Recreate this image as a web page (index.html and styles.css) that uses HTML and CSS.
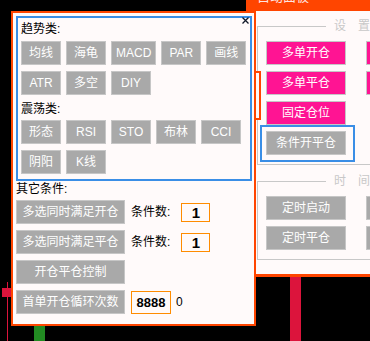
FILE: index.html
```html
<!DOCTYPE html>
<html lang="zh-CN">
<head>
	<meta charset="UTF-8">
	<title>自动面板</title>
	<link rel="stylesheet" href="styles.css">
</head>
<body>
	<!-- 背景K线 -->
	<div class="candle wick-a"></div>
	<div class="candle body-a"></div>
	<div class="candle body-b"></div>
	<div class="candle body-c"></div>

	<!-- 后面的自动面板 -->
	<div class="panel">
		<div class="panel-title"><span>自动面板</span></div>
		<div class="panel-body">
			<fieldset class="group">
				<legend>设置</legend>
				<div class="group-grid">
					<div class="btn pink">多单开仓</div>
					<div class="btn pink">空单开仓</div>
					<div class="btn pink">多单平仓</div>
					<div class="btn pink">空单平仓</div>
					<div class="btn pink">固定仓位</div>
					<div></div>
					<div class="btn picked">条件开平仓</div>
				</div>
			</fieldset>
			<fieldset class="group group-time">
				<legend>时间</legend>
				<div class="group-grid">
					<div class="btn">定时启动</div>
					<div class="btn">定时停止</div>
					<div class="btn">定时平仓</div>
					<div class="btn">定时开仓</div>
				</div>
			</fieldset>
		</div>
	</div>
	<div class="sizer"></div>

	<!-- 条件开平仓弹窗 -->
	<div class="popup">
		<div class="trend">
			<svg class="close" width="7" height="7" viewBox="0 0 7 7">
				<path d="M0.5 0.5L6.5 6.5M6.5 0.5L0.5 6.5" stroke="#101828" stroke-width="1.3"/>
			</svg>
			<div class="label">趋势类:</div>
			<div class="row">
				<div class="btn">均线</div>
				<div class="btn">海龟</div>
				<div class="btn">MACD</div>
				<div class="btn">PAR</div>
				<div class="btn">画线</div>
			</div>
			<div class="row">
				<div class="btn">ATR</div>
				<div class="btn">多空</div>
				<div class="btn">DIY</div>
			</div>
			<div class="label label-2">震荡类:</div>
			<div class="row">
				<div class="btn">形态</div>
				<div class="btn">RSI</div>
				<div class="btn">STO</div>
				<div class="btn">布林</div>
				<div class="btn">CCI</div>
			</div>
			<div class="row">
				<div class="btn">阴阳</div>
				<div class="btn">K线</div>
			</div>
		</div>

		<div class="other-title">其它条件:</div>
		<div class="cond-row">
			<div class="btn">多选同时满足开仓</div>
			<span class="count">条件数:</span>
			<div class="num">1</div>
		</div>
		<div class="cond-row">
			<div class="btn">多选同时满足平仓</div>
			<span class="count">条件数:</span>
			<div class="num">1</div>
		</div>
		<div class="cond-row">
			<div class="btn">开仓平仓控制</div>
		</div>
		<div class="cond-row">
			<div class="btn">首单开仓循环次数</div>
			<div class="loop">8888</div>
			<span class="zero">0</span>
		</div>
	</div>
</body>
</html>
```

FILE: styles.css
```css
*{
	margin: 0;
	padding: 0;
	box-sizing: border-box;
}
body{
	width: 370px;
	height: 341px;
	background: #000000;
	position: relative;
	overflow: hidden;
	font-family: "Liberation Sans", "Noto Sans CJK SC", sans-serif;
	font-size: 12px;
	line-height: 16px;
	color: #000000;
}

/*背景K线*/
.candle{
	position: absolute;
}
.wick-a{
	left: 7px;
	top: 282px;
	width: 1px;
	height: 59px;
	background: #dc143c;
}
.body-a{
	left: 2px;
	top: 288px;
	width: 9px;
	height: 9px;
	background: #dc143c;
}
.body-b{
	left: 34px;
	top: 316px;
	width: 11px;
	height: 25px;
	background: #228b22;
}
.body-c{
	left: 290px;
	top: 270px;
	width: 11px;
	height: 71px;
	background: #dc143c;
}

/*按钮公共样式*/
.btn{
	height: 24px;
	border: 1px solid #c6c6c6;
	background: #a9a9a9;
	color: #ffffff;
	text-align: center;
	line-height: 22px;
	white-space: nowrap;
}
.pink{
	background: #ff1493;
}

/*自动面板*/
.panel{
	position: absolute;
	left: 246px;
	top: 0;
	width: 130px;
	height: 277px;
	background: #ff4500;
}
.panel-title{
	height: 11px;
	overflow: hidden;
	padding-left: 11px;
	color: #ffe4e1;
}
.panel-title span{
	display: block;
	margin-top: -10px;
	font-size: 13px;
	line-height: 14px;
}
.panel-body{
	margin-left: 10px;
	height: 263px;
	background: #fffafa;
	padding-left: 1px;
	padding-top: 8px;
}
.group{
	width: 200px;
	border: 1px solid #c8c8c8;
}
.group legend{
	height: 14px;
	margin-left: 68px;
	padding-left: 8px;
	line-height: 14px;
	letter-spacing: 12px;
	color: #c8c8c8;
}
.group-grid{
	display: grid;
	grid-template-columns: 80px 80px;
	grid-auto-rows: 24px;
	column-gap: 20px;
	row-gap: 6px;
	padding: 8px 0 9px 8px;
}
.group-time{
	margin-top: 9px;
}
.group-time .group-grid{
	padding-top: 8px;
}
/*选中的按钮外框*/
.picked{
	position: relative;
}
.picked::after{
	content: "";
	position: absolute;
	left: -7px;
	top: -7px;
	right: -10px;
	bottom: -8px;
	border: 2px solid #3a8ee6;
}
.sizer{
	position: absolute;
	left: 254px;
	top: 71px;
	width: 7px;
	height: 49px;
	border: 2px solid #ff4500;
	background: #fffafa;
}

/*弹窗*/
.popup{
	position: absolute;
	left: 11px;
	top: 11px;
	width: 245px;
	height: 315px;
	border: 2px solid #ff4500;
	background: #fffafa;
	padding: 3px 2px 0 3px;
}
.trend{
	position: relative;
	border: 2px solid #3a8ee6;
	padding: 2px 0 5px 3px;
}
.close{
	position: absolute;
	top: -1px;
	right: 1px;
}
.label{
	height: 18px;
	line-height: 18px;
	margin-bottom: 3px;
}
.label-2{
	margin-top: 5px;
	margin-bottom: 2px;
}
.row{
	display: flex;
	gap: 5px;
}
.row + .row{
	margin-top: 6px;
}
.row .btn{
	min-width: 40px;
	padding: 0 4px;
}
.other-title{
	height: 16px;
	margin-bottom: 3px;
}
.cond-row{
	display: flex;
	align-items: center;
	height: 24px;
}
.cond-row + .cond-row{
	margin-top: 6px;
}
.cond-row .btn{
	width: 109px;
}
.count{
	margin-left: 6px;
}
.num{
	margin-left: 11px;
	width: 29px;
	height: 19px;
	border: 1px solid #ff8c00;
	text-align: center;
	font-weight: bold;
	font-size: 15px;
	line-height: 17px;
}
.loop{
	margin-left: 6px;
	width: 40px;
	height: 23px;
	border: 1px solid #ff8c00;
	text-align: center;
	font-weight: bold;
	font-size: 13px;
	line-height: 21px;
}
.zero{
	margin-left: 5px;
}
```
